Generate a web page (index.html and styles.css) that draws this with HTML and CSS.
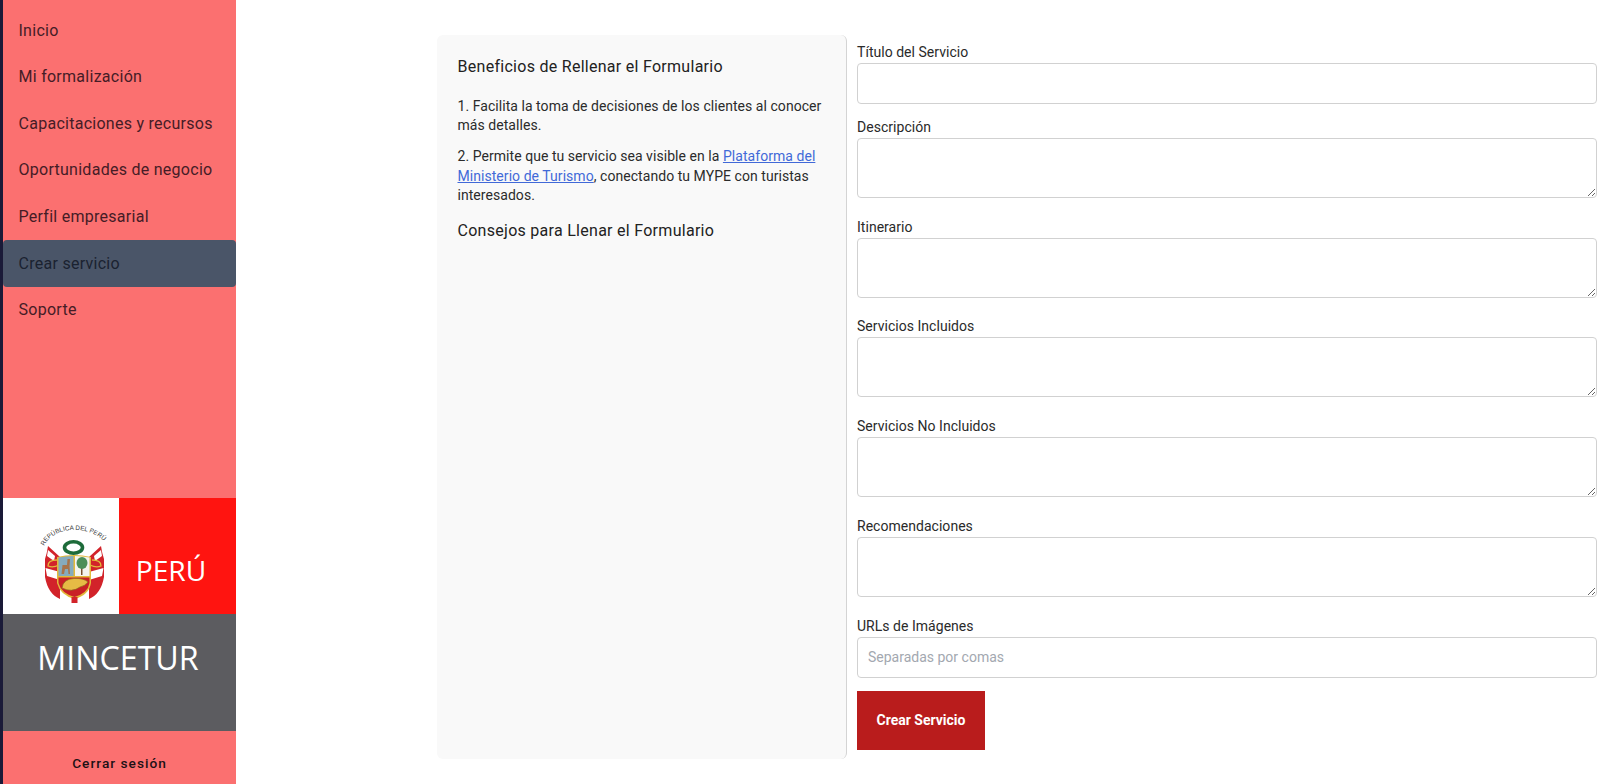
FILE: index.html
```html
<!DOCTYPE html>
<html lang="es">
<head>
<meta charset="utf-8">
<title>Crear servicio</title>
<link rel="stylesheet" href="styles.css">
</head>
<body>
<div class="app">
  <aside class="sidebar">
    <nav class="nav">
      <a class="nav-item">Inicio</a>
      <a class="nav-item">Mi formalización</a>
      <a class="nav-item">Capacitaciones y recursos</a>
      <a class="nav-item">Oportunidades de negocio</a>
      <a class="nav-item">Perfil empresarial</a>
      <a class="nav-item active">Crear servicio</a>
      <a class="nav-item">Soporte</a>
    </nav>
    <div class="brand">
      <div class="brand-top">
        <div class="brand-arms">
          <svg class="arms" viewBox="0 0 90 95" width="90" height="95">
            <defs>
              <path id="arc" d="M14 31 C24 10 62 9 77 30"/>
              <g id="drape">
                <path d="M15 44 Q17 38 18 31 L30 42 L30 84 Q18 79 15 62Z" fill="#d2232a"/>
                <path d="M18 35 L25 41 L24 46 L17 41Z" fill="#fff"/>
                <path d="M15.500 53 L30 57 L30 65 L17 61Z" fill="#fff"/>
                <path d="M27 45 Q18 45 18 51 Q23 53 29 50" fill="none" stroke="#e2b93b" stroke-width="1.300"/>
              </g>
            </defs>
            <text class="arms-text"><textPath href="#arc">REPÚBLICA DEL PERÚ</textPath></text>
            <use href="#drape"/>
            <use href="#drape" transform="translate(89 0) scale(-1 1)"/>
            <ellipse cx="43.500" cy="32.500" rx="9" ry="5.800" fill="none" stroke="#1d6b3a" stroke-width="3.600"/>
            <path d="M27 42 Q44 38 61 42 L61 68 Q59 80 44.500 84 Q30 80 27 68Z" fill="#e2b93b"/>
            <path d="M28.500 42.500 Q36 41 43.500 41 L43.500 61 L28.500 61Z" fill="#86abbd"/>
            <path d="M45 41 Q52 41 59.500 42.500 L59.500 61 L45 61Z" fill="#f4f4ee"/>
            <path d="M31.500 59 L32.500 50 L37 50 L37.500 44 L40 44 L39.500 51 L40 59 L38.500 59 L38 54 L35 54 L34 59Z" fill="#a8744a"/>
            <rect x="51" y="50" width="1.500" height="10" fill="#7a5230"/>
            <ellipse cx="52" cy="48" rx="5.500" ry="6" fill="#4c8f58"/>
            <path d="M28.500 62.500 L59.500 62.500 L59.500 68 Q58 78 44.500 82 Q31 78 28.500 68Z" fill="#c92026"/>
            <path d="M32 73 Q33 64 44 63.500 Q54 63 58 67 Q55 71 50 72 Q42 78 32 73Z" fill="#e6bb45" stroke="#8b6a1e" stroke-width=".7"/>
            <rect x="41.500" y="82" width="6" height="6" fill="#d2232a"/>
          </svg>
        </div>
        <div class="brand-peru">PERÚ</div>
      </div>
      <div class="brand-mincetur">MINCETUR</div>
    </div>
    <div class="logout">Cerrar sesión</div>
  </aside>
  <main class="main">
    <section class="info">
      <h2 class="info-title">Beneficios de Rellenar el Formulario</h2>
      <p class="info-text">1. Facilita la toma de decisiones de los clientes al conocer más detalles.</p>
      <p class="info-text">2. Permite que tu servicio sea visible en la <a class="info-link">Plataforma del Ministerio de Turismo</a>, conectando tu MYPE con turistas interesados.</p>
      <h2 class="info-title info-title-next">Consejos para Llenar el Formulario</h2>
    </section>
    <form class="form">
      <label class="label">Título del Servicio</label>
      <input class="control" type="text">
      <label class="label">Descripción</label>
      <textarea class="control area"></textarea>
      <label class="label">Itinerario</label>
      <textarea class="control area"></textarea>
      <label class="label">Servicios Incluidos</label>
      <textarea class="control area"></textarea>
      <label class="label">Servicios No Incluidos</label>
      <textarea class="control area"></textarea>
      <label class="label">Recomendaciones</label>
      <textarea class="control area"></textarea>
      <label class="label">URLs de Imágenes</label>
      <input class="control" type="text" placeholder="Separadas por comas">
      <button class="submit" type="button">Crear Servicio</button>
    </form>
  </main>
</div>
</body>
</html>
```
FILE: styles.css
```css
* { box-sizing: border-box; }
html, body { margin: 0; height: 100%; }
body { font-family: Roboto, "Liberation Sans", sans-serif; color: #1f2328; background: #fff; overflow: hidden; }
.app { display: flex; height: 784px; }
.sidebar { width: 236px; flex: none; display: flex; flex-direction: column; background: #fb7070; border-left: 3px solid #1a1a38; }
.nav { flex: 1; display: flex; flex-direction: column; padding-top: 6.700px; }
.nav-item { height: 46.650px; flex: none; display: flex; align-items: center; padding-left: 15.500px; font-size: 16px; letter-spacing: .27px; color: #451c26; }
.nav-item.active { background: #4a5568; border-radius: 4px; color: #1a2230; }
.brand-top { display: flex; height: 116px; }
.brand-arms { width: 116px; background: #fff; overflow: hidden; padding-top: 17px; }
.arms { display: block; margin-left: 27px; }
.arms-text { font-family: "Liberation Sans", sans-serif; font-size: 6.300px; fill: #333; }
.brand-peru { flex: 1; background: #ff1410; color: #fff; font-family: "Open Sans", sans-serif; font-size: 28.200px; display: flex; align-items: center; justify-content: center; padding: 27px 13px 0 0; }
.brand-mincetur { height: 117px; background: #5c5c60; color: #fff; font-family: "Open Sans", sans-serif; font-size: 32.200px; text-align: center; padding: 20px 3px 0 0; line-height: 48px; }
.logout { height: 53px; flex: none; display: flex; align-items: center; justify-content: center; padding-top: 10px; font-size: 13.700px; font-weight: 500; letter-spacing: 1px; color: #1d1015; }
.main { flex: 1; display: flex; padding: 35px 3px 25px 201px; }
.info { width: 410px; flex: none; background: #f9f9f9; border-right: 1px solid #d4d4d4; border-radius: 6px; padding: 21px 20px 20px 20.500px; margin-right: 10px; }
.info-title { margin: 0 0 18.500px; font-size: 16px; font-weight: 400; line-height: 22px; letter-spacing: .28px; color: #222; }
.info-title-next { margin-top: 14px; }
.info-text { margin: 0 0 12px; font-size: 14px; line-height: 19.400px; letter-spacing: .05px; color: #2b2b2b; }
.info-link { color: #4169d8; text-decoration: underline; }
.form { flex: 1; display: flex; flex-direction: column; }
.label { font-size: 14px; line-height: 19.800px; height: 20px; margin-top: 8px; letter-spacing: .03px; color: #2a2a2a; flex: none; }
.control { display: block; width: 100%; height: 41px; padding: 0 10px; border: 1px solid #d1d1d1; border-radius: 4px; background: #fff; font: 14px Roboto, sans-serif; margin-bottom: 5.750px; flex: none; }
.control::placeholder { color: #a3a8b0; }
.area { height: 60px; margin-bottom: 19.750px; }
.area + .label { margin-top: 0; }
.submit { width: 128px; height: 59px; margin-top: 7.750px; border: 0; background: #b91c1c; color: #fff; font: 700 14px Roboto, sans-serif; flex: none; padding: 0 0 2px; }
```
